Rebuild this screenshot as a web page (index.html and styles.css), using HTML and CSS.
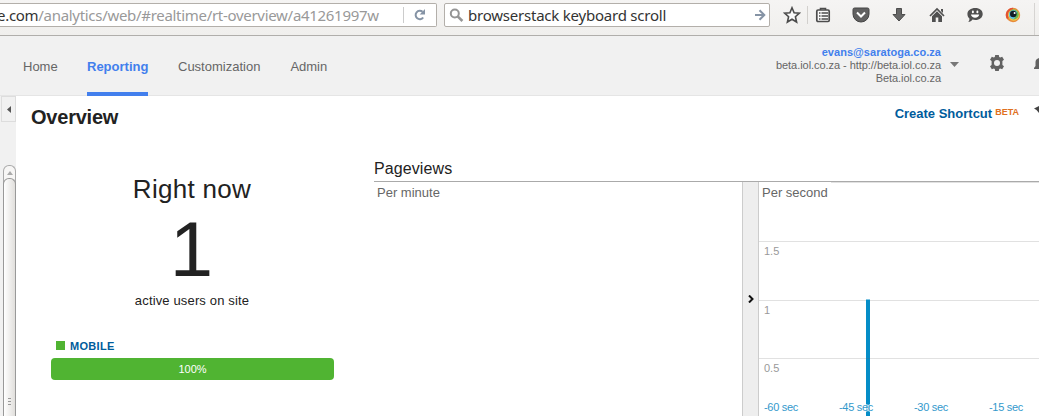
FILE: index.html
```html
<!DOCTYPE html>
<html lang="en">
<head>
<meta charset="utf-8">
<title>Overview - Analytics</title>
<link rel="stylesheet" href="styles.css">
</head>
<body>
<div class="toolbar">
  <div class="url"><span class="url-text"><b>e.com</b>/analytics/web/#realtime/rt-overview/a41261997w</span>
    <span class="reload"><svg width="14" height="14" viewBox="0 0 14 14"><path d="M10.2 9.5A4.2 4.2 0 1 1 9.6 3.8" fill="none" stroke="#8593a5" stroke-width="2"/><path d="M12 1v5.5H6.7z" fill="#8593a5"/></svg></span>
  </div>
  <div class="search">
    <svg width="15" height="15" viewBox="0 0 15 15" fill="none" stroke="#959595"><circle cx="5.8" cy="5.5" r="4" stroke-width="2"/><path d="M8.7 8.4l4.7 4.6" stroke-width="2.6"/></svg>
    <span class="search-text">browserstack keyboard scroll</span>
    <svg class="go" width="12" height="12" viewBox="0 0 12 12" fill="none" stroke="#8593a5" stroke-width="2"><path d="M1 6h9M5.5 1.2L10.3 6l-4.8 4.8"/></svg>
  </div>
  <div class="star"><svg width="18" height="18" viewBox="0 0 18 18"><path d="M9 1.8l2.1 4.9 5.2.5-3.9 3.5 1.2 5.3L9 13.2 4.4 16l1.2-5.3-3.9-3.5 5.2-.5z" fill="#fafafa" stroke="#4c4c4c" stroke-width="1.6"/></svg></div>
  <div class="tools">
    <span><svg width="16" height="16" viewBox="0 0 16 16"><path d="M5.5 3V1.5h5V3" fill="none" stroke="#4c4c4c" stroke-width="1.6"/><rect x="1.8" y="3" width="12.4" height="11.5" rx="1.2" fill="#fafafa" stroke="#4c4c4c" stroke-width="1.7"/><path d="M4 6h1.5M4 9h1.5M4 12h1.5M6.5 6H13M6.5 9H13M6.5 12H13" stroke="#4c4c4c" stroke-width="1.5"/></svg></span>
    <span><svg width="18" height="16" viewBox="0 0 18 16"><path d="M2.5 1h13q1.500 0 1.500 1.500V7a8 8 0 0 1-16 0V2.500Q1 1 2.500 1z" fill="#606060" stroke="#444"/><path d="M5 5.500l4 4 4-4" fill="none" stroke="#fff" stroke-width="2"/></svg></span>
    <span><svg width="16" height="16" viewBox="0 0 16 16"><path d="M5.500 1.500h5v6h3.500l-6 6.500-6-6.500h3.500z" fill="#666" stroke="#4c4c4c"/></svg></span>
    <span><svg width="16" height="16" viewBox="0 0 16 16"><path d="M1 9l7-7 7 7" fill="none" stroke="#505050" stroke-width="1.7"/><path d="M12 2h2v4l-2-2zM3 9.200l5-5 5 5V15H9.300v-4.500H6.700V15H3z" fill="#505050"/></svg></span>
    <span><svg width="18" height="16" viewBox="0 0 18 16"><path d="M9.300 1c4.400 0 7.400 2.500 7.400 5.900s-3 6-7.400 6c-1 0-2-.1-2.800-.4-1 1.300-2.400 2.300-4.200 2.400.8-.9 1.200-2.100 1.200-3.200C2.300 10.500 1.400 9 1.400 7 1.400 3.500 4.900 1 9.300 1z" fill="#505050"/><path d="M5 7.500h8.200c0 2-2 3.200-4.100 3.200S5 9.500 5 7.500z" fill="#fff"/><ellipse cx="6.900" cy="4.900" rx="1" ry="1.300" fill="#fff"/><ellipse cx="11.400" cy="4.900" rx="1" ry="1.300" fill="#fff"/></svg></span>
    <span><svg width="16" height="16" viewBox="0 0 16 16"><circle cx="8" cy="8" r="7.200" fill="#e88b3b"/><path d="M8 .8A7.200 7.200 0 0 0 2 12L8 8z" fill="#e35334"/><circle cx="8.700" cy="8" r="5.700" fill="#f2c84d"/><circle cx="8.800" cy="7.500" r="4.900" fill="#68b853"/><path d="M4 8a4.500 4.500 0 0 1 8-3l-3 7C6 12 4 10.500 4 8z" fill="#61c5e8"/><circle cx="8.300" cy="7" r="3.300" fill="#111e27"/><circle cx="9.600" cy="5.900" r="1" fill="#fff"/></svg></span>
  </div>
</div>
<header class="header">
  <nav class="nav"><a>Home</a><a class="active">Reporting</a><a>Customization</a><a>Admin</a></nav>
  <div class="account"><strong>evans@saratoga.co.za</strong><span>beta.iol.co.za - http://beta.iol.co.za</span><span>Beta.iol.co.za</span></div>
  <svg class="caret" width="9" height="5" viewBox="0 0 9 5"><path d="M0 0h9L4.500 5z" fill="#777"/></svg>
  <svg class="gear" width="16" height="16" viewBox="0 0 16 16"><path d="M6.200 0h3.600l.4 2 1 .6 2-.8L15 4.800l-1.600 1.300v3.800L15 11.200l-1.800 3-2-.8-1 .6-.4 2H6.200l-.4-2-1-.6-2 .8-1.800-3 1.600-1.300V6.100L1 4.800l1.800-3 2 .8 1-.6z" fill="#626262"/><circle cx="8" cy="8" r="3" fill="#f1f1f1"/></svg>
  <svg class="bell" width="5" height="14" viewBox="0 0 5 14"><path d="M0 12v-1l1.500-2V5Q1.500 2 5 1v11z" fill="#626262"/></svg>
</header>
<div class="body">
  <aside class="side">
    <div class="collapse"><svg width="4" height="7" viewBox="0 0 4 7"><path d="M4 0v7L0 3.500z" fill="#555"/></svg></div>
    <div class="scroll">
      <svg class="up" width="6" height="4" viewBox="0 0 6 4"><path d="M3 0l3 4H0z" fill="#aaa"/></svg>
      <div class="thumb"><i></i><i></i><i></i></div>
    </div>
  </aside>
  <main class="main">
    <div class="title-row">
      <h1>Overview</h1>
      <div class="shortcut">Create Shortcut<sup>BETA</sup></div>
      <svg class="hat" width="5" height="7" viewBox="0 0 5 7"><path d="M0 2.500l5-2.500v7L2.500 4z" fill="#444"/></svg>
    </div>
    <div class="content">
      <section class="now">
        <div class="now-title">Right now</div>
        <div class="count">1</div>
        <div class="caption">active users on site</div>
        <div class="legend"><i></i>MOBILE</div>
        <div class="bar">100%</div>
      </section>
      <section class="views">
        <h2>Pageviews</h2>
        <div class="charts">
          <div class="minute">Per minute</div>
          <div class="splitter"><svg width="6" height="8" viewBox="0 0 6 8"><path d="M1 0.500L4.500 4 1 7.500" fill="none" stroke="#111" stroke-width="2"/></svg></div>
          <svg class="second" width="280" height="234" viewBox="0 0 280 234">
            <path d="M72 .5H280M0 59.500H280M0 118.500H280M0 176.500H280" stroke="#e1e1e1"/>
            <rect x="107" y="117.500" width="4" height="117" fill="#058dc7"/>
            <path d="M107 176.500h4" stroke="#1a82b4"/>
            <text x="3" y="15" class="heading">Per second</text>
            <g class="y"><text x="5" y="73">1.5</text><text x="5" y="132">1</text><text x="5" y="190">0.5</text></g>
            <g class="x"><text x="5" y="229">-60 sec</text><text x="80" y="229">-45 sec</text><text x="155" y="229">-30 sec</text><text x="230" y="229">-15 sec</text></g>
          </svg>
        </div>
      </section>
    </div>
  </main>
</div>
</body>
</html>
```
FILE: styles.css
```css
* { box-sizing: border-box; }
body { margin: 0; width: 1039px; height: 416px; overflow: hidden; display: flex; flex-direction: column; background: #fff; font-family: "Liberation Sans", Arial, sans-serif; font-size: 13px; color: #222; }
svg { display: block; flex: none; }
.toolbar { height: 36px; flex: none; display: flex; padding-top: 3px; background: linear-gradient(#f5f4f3, #f0efed); border-bottom: 1px solid #b0aeab; font: 15px/23px "Noto Sans", sans-serif; }
.url { width: 437px; height: 24px; flex: none; display: flex; justify-content: space-between; background: #fff; border: 1px solid #b3afaa; border-left: 0; border-radius: 0 2px 2px 0; color: #999; white-space: nowrap; }
.url-text { margin-left: -3px; letter-spacing: -0.3px; }
.url b { font-weight: 400; color: #333; }
.reload { width: 33px; height: 16px; margin-top: 3px; padding: 1px 0 0 9px; border-left: 1px solid #ccc; }
.search { width: 326px; height: 24px; flex: none; margin-left: 7px; padding: 0 3px 0 4px; display: flex; align-items: center; background: #fff; border: 1px solid #b3afaa; border-radius: 2px; color: #333; white-space: nowrap; }
.search-text { margin-left: 4px; letter-spacing: -0.22px; }
.go { margin-left: auto; }
.star { width: 38px; height: 18px; margin: 3px 0 0; padding-left: 13px; border-right: 1px solid #d2d0cd; }
.tools { display: flex; margin-left: -4px; height: 32px; width: 231px; flex: none; border-right: 1px solid #d6d4d2; }
.tools span { width: 38px; height: 24px; flex: none; display: flex; align-items: center; justify-content: center; }
.header { height: 60px; flex: none; display: flex; background: #f1f1f1; border-bottom: 1px solid #e5e5e5; color: #666; }
.nav { display: flex; gap: 30px; padding-left: 23px; height: 60px; line-height: 61px; }
.nav a:first-child { width: 34px; }
.active { width: 61px; color: #427fed; font-weight: 700; border-bottom: 4px solid #427fed; }
.account { margin-left: auto; padding-top: 10px; display: flex; flex-direction: column; align-items: flex-end; font-size: 11px; line-height: 13px; letter-spacing: -0.05px; }
.account strong { color: #427fed; letter-spacing: 0.05px; }
.caret { margin: 26px 0 0 9px; }
.gear { margin: 19px 0 0 30px; }
.bell { margin: 21px 0 0 29px; }
.body { flex: 1; display: flex; min-height: 0; }
.side { width: 16px; flex: none; background: #f1f1f1; padding-left: 1px; }
.collapse { width: 15px; height: 26px; border: 1px solid #ddd; display: flex; align-items: center; justify-content: center; }
.scroll { width: 13px; height: 251px; margin: 43px 0 0 2px; border: 1px solid #aaa; border-bottom: 0; border-radius: 6px 6px 0 0; background: #f7f6f5; }
.up { margin: 5px auto 3px; }
.thumb { width: 13px; height: 238px; margin-left: -1px; border: 1px solid #999; border-bottom: 0; border-radius: 6px 6px 0 0; background: linear-gradient(90deg, #fff, #e1dfdc); padding: 219px 0 0 4px; display: flex; flex-direction: column; gap: 2px; }
.thumb i { width: 3px; height: 1px; background: #999; }
.main { flex: 1; display: flex; flex-direction: column; }
.title-row { display: flex; height: 58px; padding: 10px 0 0 15px; }
h1 { margin: 0; font-size: 20px; line-height: 23px; letter-spacing: -0.22px; }
.shortcut { margin-left: auto; font-weight: 700; line-height: 15px; color: #005c9c; display: flex; gap: 3px; }
.shortcut sup { font-size: 9px; line-height: 13px; color: #e07020; }
.hat { margin: 0 0 0 15px; }
.content { display: flex; flex: 1; }
.now { width: 283px; margin-left: 35px; flex: none; text-align: center; }
.now-title { margin: 20px 0 0 -1px; font-size: 26px; line-height: 30px; letter-spacing: 0.3px; }
.count { margin-left: -2px; font-size: 78px; line-height: 90px; }
.caption { line-height: 15px; margin: -1px 0 0 -1px; letter-spacing: 0.15px; }
.legend { margin-top: 31px; padding-left: 5px; display: flex; align-items: center; gap: 5px; height: 13px; font-size: 11px; font-weight: 700; color: #005c9c; letter-spacing: 0.3px; }
.legend i { width: 9px; height: 9px; background: #50b432; }
.bar { margin-top: 6px; height: 22px; border-radius: 4px; background: #50b432; color: #fff; font-size: 11px; line-height: 22px; }
.views { width: 665px; flex: none; margin-left: 40px; }
h2 { margin: 0; height: 28px; padding-top: 6px; font-size: 16px; line-height: 18px; font-weight: 400; border-bottom: 1px solid #aaa; letter-spacing: 0.1px; }
.charts { display: flex; height: 234px; color: #666; }
.minute { width: 368px; padding: 3px 0 0 3px; line-height: 15px; }
.splitter { width: 17px; flex: none; background: #eee; border: 1px solid #ccc; border-width: 0 1px; display: flex; align-items: center; justify-content: center; }
.heading { font-size: 13px; fill: #666; }
.y { font-size: 11px; fill: #999; }
.x { font-size: 11px; fill: #3399cc; letter-spacing: -0.3px; stroke: #fff; stroke-width: 2px; stroke-opacity: .7; paint-order: stroke; }
```
